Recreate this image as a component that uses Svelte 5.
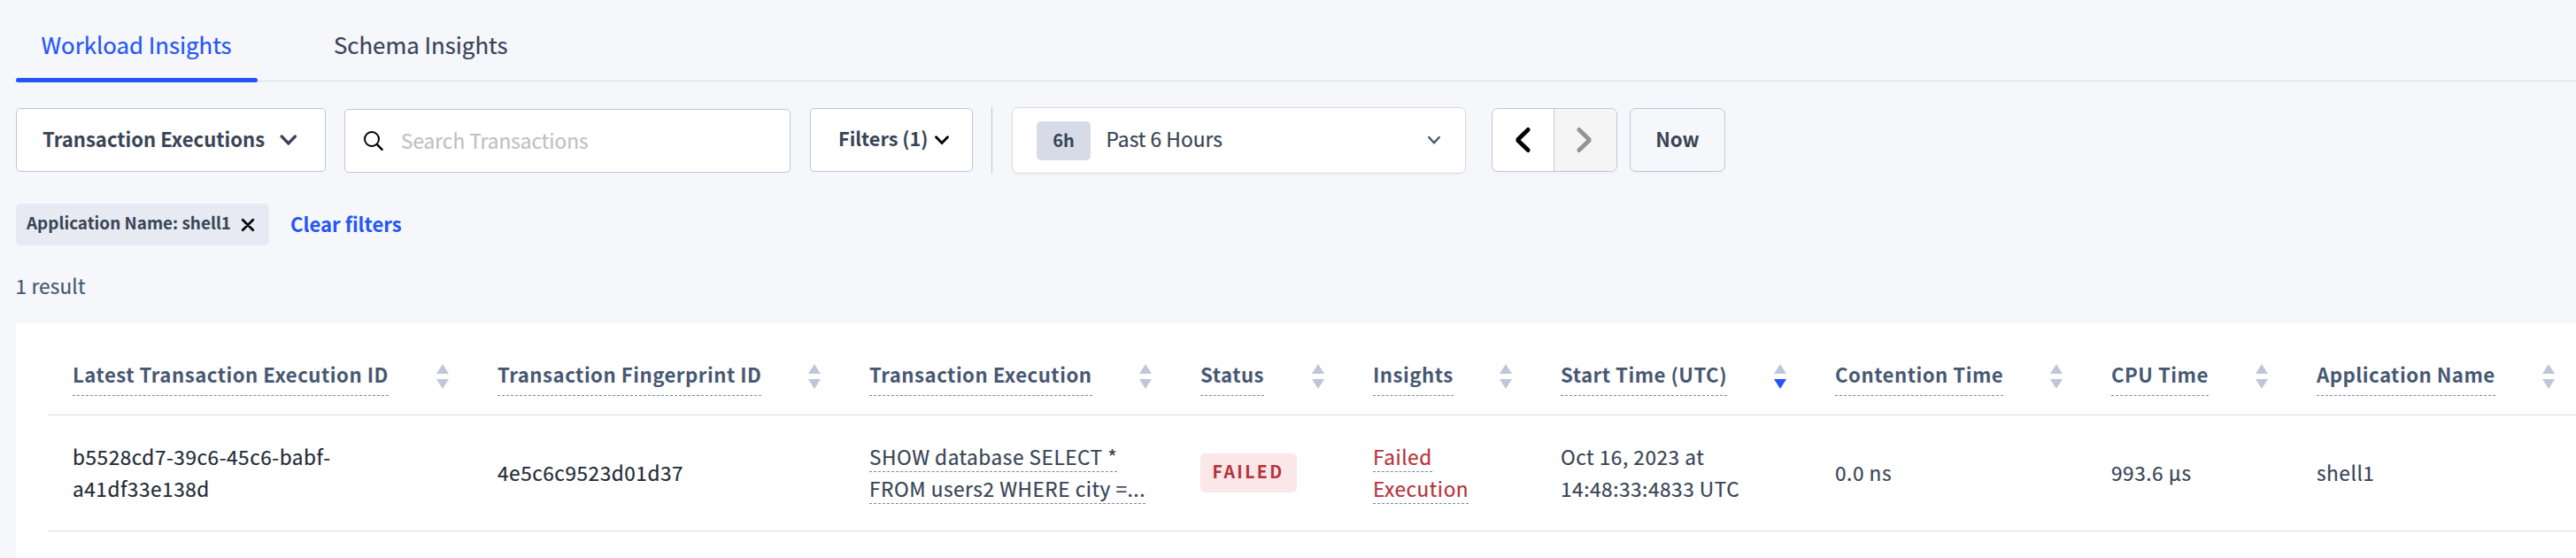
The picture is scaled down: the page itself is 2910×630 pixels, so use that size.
<script>
  const columns = [
    'Latest Transaction Execution ID',
    'Transaction Fingerprint ID',
    'Transaction Execution',
    'Status',
    'Insights',
    'Start Time (UTC)',
    'Contention Time',
    'CPU Time',
    'Application Name',
  ];
  const sorted = 'Start Time (UTC)';
</script>

<main>
  <nav class="tabs">
    <button class="tab active">Workload Insights</button>
    <button class="tab">Schema Insights</button>
  </nav>

  <section class="toolbar">
    <button class="box select">
      <span>Transaction Executions</span>
      <svg width="20" height="14" viewBox="0 0 20 14"><path d="M2.2 3L9.8 10.8L17.4 3" fill="none" stroke="#394455" stroke-width="3.3" stroke-linecap="round" /></svg>
    </button>
    <div class="box search">
      <svg width="24" height="24" viewBox="0 0 24 24"><circle cx="10" cy="10" r="8" fill="none" stroke="#000" stroke-width="2" /><path d="M15.7 15.9L21.6 21.9" stroke="#000" stroke-width="2.4" stroke-linecap="round" /></svg>
      <span>Search Transactions</span>
    </div>
    <button class="box filters">
      <span>Filters (1)</span>
      <svg width="18" height="12" viewBox="0 0 18 12"><path d="M2.5 2.7L9 9.5L15.5 2.7" fill="none" stroke="#000" stroke-width="2.9" stroke-linecap="round" /></svg>
    </button>
    <div class="rule"></div>
    <div class="box range">
      <span class="badge">6h</span>
      <span class="label">Past 6 Hours</span>
      <svg width="16" height="12" viewBox="0 0 16 12"><path d="M2.2 2L8 8.3L13.8 2" fill="none" stroke="#475872" stroke-width="2.4" stroke-linecap="round" /></svg>
    </div>
    <div class="box pager">
      <button class="prev" aria-label="Previous"><svg width="20" height="30" viewBox="0 0 20 30"><path d="M16.2 3.4L4.2 15L16.2 26.6" fill="none" stroke="#000" stroke-width="4.8" stroke-linecap="round" stroke-linejoin="bevel" /></svg></button>
      <button class="next" aria-label="Next"><svg width="20" height="30" viewBox="0 0 20 30"><path d="M3.8 3.4L15.8 15L3.8 26.6" fill="none" stroke="#949494" stroke-width="4.8" stroke-linecap="round" stroke-linejoin="bevel" /></svg></button>
    </div>
    <button class="box now"><span>Now</span></button>
  </section>

  <section class="applied">
    <div class="chip">
      <span>Application Name: shell1</span>
      <svg width="16" height="16" viewBox="0 0 16 16"><path d="M2.2 2.2L13.8 13.8M13.8 2.2L2.2 13.8" stroke="#000" stroke-width="2.7" stroke-linecap="round" /></svg>
    </div>
    <button class="clear">Clear filters</button>
  </section>

  <p class="count">1 result</p>

  <section class="panel">
    <div class="grid head">
      {#each columns as name}
        <div class="th">
          <span>{name}</span>
          <svg width="14" height="28" viewBox="0 0 14 28">
            <path d="M7 0L14 11H0Z" fill="#c0c6d9" />
            <path d="M7 28L0 17H14Z" fill={name === sorted ? '#2456f6' : '#c0c6d9'} />
          </svg>
        </div>
      {/each}
    </div>
    <div class="grid row">
      <div class="dark">b5528cd7-39c6-45c6-babf-<br />a41df33e138d</div>
      <div class="dark">4e5c6c9523d01d37</div>
      <div><span class="tip">SHOW database SELECT *</span><br /><span class="tip">FROM users2 WHERE city =...</span></div>
      <div><span class="status">FAILED</span></div>
      <div class="danger"><span class="tip">Failed</span><br /><span class="tip">Execution</span></div>
      <div>Oct 16, 2023 at<br />14:48:33:4833 UTC</div>
      <div>0.0 ns</div>
      <div>993.6 µs</div>
      <div>shell1</div>
    </div>
  </section>
</main>

<style>
  :global(body) { background: #f5f7fa; overflow: hidden; }
  main {
    width: 2910px;
    height: 630px;
    box-sizing: border-box;
    padding-left: 18px;
    overflow: hidden;
    display: flex;
    flex-direction: column;
    background: #f5f7fb;
    color: #394455;
    font: 400 22.6px/36px "Noto Sans CJK SC", "Open Sans", sans-serif;
    white-space: nowrap;
  }
  button {
    font: inherit;
    color: inherit;
    background: none;
    border: 0;
    margin: 0;
    padding: 0;
    white-space: nowrap;
  }
  svg { display: block; flex: none; }
  .tab, .search span, .label, .count, .row { -webkit-text-stroke: 0.2px currentColor; }

  .tabs {
    display: flex;
    gap: 57.5px;
    height: 92px;
    box-sizing: border-box;
    border-bottom: 1px solid #d6dbe7;
    flex: none;
  }
  .tab {
    position: relative;
    height: 91px;
    padding: 30px 29px 0 28.5px;
    font-size: 25.75px;
    line-height: 40px;
    display: flex;
    align-items: flex-start;
    box-sizing: border-box;
  }
  .tab.active { color: #2456f6; width: 273px; }
  .tab.active::after {
    content: '';
    position: absolute;
    left: 0;
    right: 0;
    bottom: -2px;
    height: 5px;
    border-radius: 3px;
    background: #2456f6;
  }

  .toolbar {
    display: flex;
    align-items: center;
    height: 75px;
    margin-top: 29px;
    flex: none;
  }
  .box {
    display: flex;
    align-items: center;
    height: 72px;
    box-sizing: border-box;
    border: 1px solid #c0c6d9;
    border-radius: 5px;
    background: #fff;
    font-size: 22.2px;
  }
  .select, .filters, .now { font-weight: 700; margin-bottom: 1px; }
  .select span, .filters span, .now span { padding-bottom: 4px; }
  .select { width: 350px; padding-left: 29px; gap: 16.5px; }
  .select span { font-size: 22.1px; }
  .search { width: 504px; margin: 1px 0 0 21px; padding-left: 20px; gap: 19px; }
  .search span { color: #bfbfbf; font-size: 22.6px; }
  .filters { width: 184px; margin-left: 22px; padding-left: 31px; gap: 6px; }
  .filters span { font-size: 21.7px; }
  .rule { width: 1px; height: 75px; margin-left: 21px; background: #c0c6d9; }
  .range {
    width: 513px;
    height: 75px;
    margin-left: 22px;
    padding: 0 27px;
    border-color: #d9d9d9;
    border-radius: 7px;
    box-shadow: 0 3px 3px rgba(0, 0, 0, 0.02);
  }
  .badge {
    width: 61px;
    height: 44px;
    box-sizing: border-box;
    margin-top: 1px;
    border-radius: 5px;
    background: #d6dbe7;
    font-size: 20px;
    font-weight: 700;
    line-height: 41px;
    text-align: center;
  }
  .label { flex: 1; margin-left: 17.5px; padding-bottom: 3px; font-size: 22.8px; }
  .pager, .now { border-radius: 7px; box-shadow: 0 3px 3px rgba(0, 0, 0, 0.02); }
  .pager { width: 142px; margin: 0 0 1px 29px; overflow: hidden; }
  .pager button { display: flex; align-items: center; height: 100%; }
  .prev { width: 70px; box-sizing: border-box; padding-left: 24px; border-right: 1px solid #c0c6d9; }
  .next { flex: 1; padding-left: 24px; background: #f5f5f5; }
  .now { width: 108px; margin-left: 14px; justify-content: center; background: #f5f7fb; }

  .applied { display: flex; align-items: center; height: 47px; margin-top: 34px; flex: none; }
  .chip {
    display: flex;
    align-items: center;
    gap: 11.5px;
    width: 286px;
    height: 47px;
    box-sizing: border-box;
    padding-left: 12px;
    border-radius: 5px;
    background: #e7eaf2;
    font-size: 18.9px;
    font-weight: 700;
  }
  .chip span { padding-bottom: 5px; }
  .chip svg { margin-top: 1px; }
  .clear { margin-left: 24px; padding-bottom: 4px; font-size: 22.1px; font-weight: 700; color: #2456f6; }
  .count { margin: 28px 0 0 -0.5px; height: 36px; color: #475872; letter-spacing: 0.15px; flex: none; }

  .panel { margin-top: 24px; padding-left: 36px; flex: 1; background: #fff; }
  .grid {
    display: grid;
    grid-template-columns: 480px 420px 374px 195px 212px 310px 312px 232px 324px;
    box-sizing: border-box;
    padding-left: 28px;
    border-bottom: 1px solid #d6dbe7;
    overflow: hidden;
  }
  .head { height: 104px; padding-top: 40px; }
  .th {
    display: flex;
    justify-content: space-between;
    align-items: flex-start;
    padding-right: 55px;
    color: #475872;
    font-size: 22.2px;
    font-weight: 700;
    line-height: 34px;
    letter-spacing: 0.49px;
  }
  .th span { padding-bottom: 7px; border-bottom: 1px dashed #7e89a9; }
  .th svg { margin-top: 6px; }
  .row { height: 131px; align-items: center; letter-spacing: 0.54px; }
  .dark { color: #242a35; }
  .tip { border-bottom: 1px dashed #7e89a9; }
  .danger { color: #b5333b; }
  .status {
    display: block;
    width: 109px;
    height: 44px;
    box-sizing: border-box;
    padding-left: 13.5px;
    border-radius: 5px;
    background: #fbe6e8;
    color: #b5333b;
    font-size: 19.5px;
    font-weight: 700;
    line-height: 39px;
    letter-spacing: 2.4px;
    -webkit-text-stroke: 0;
  }
</style>
